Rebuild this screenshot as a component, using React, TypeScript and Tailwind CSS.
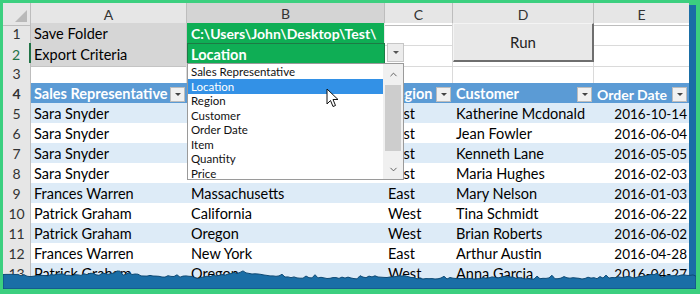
import { ChevronDown, ChevronUp } from "lucide-react";

const cols = "grid grid-cols-[28px_156px_198px_68px_141px_95px]";
const cellFont = "font-['Lato','Liberation_Sans',sans-serif]";

const rows = [
  { n: 5, rep: "Sara Snyder", loc: "", region: "East", customer: "Katherine Mcdonald", date: "2016-10-14" },
  { n: 6, rep: "Sara Snyder", loc: "", region: "East", customer: "Jean Fowler", date: "2016-06-04" },
  { n: 7, rep: "Sara Snyder", loc: "", region: "East", customer: "Kenneth Lane", date: "2016-05-05" },
  { n: 8, rep: "Sara Snyder", loc: "", region: "East", customer: "Maria Hughes", date: "2016-02-03" },
  { n: 9, rep: "Frances Warren", loc: "Massachusetts", region: "East", customer: "Mary Nelson", date: "2016-01-03" },
  { n: 10, rep: "Patrick Graham", loc: "California", region: "West", customer: "Tina Schmidt", date: "2016-06-22" },
  { n: 11, rep: "Patrick Graham", loc: "Oregon", region: "West", customer: "Brian Roberts", date: "2016-06-02" },
  { n: 12, rep: "Frances Warren", loc: "New York", region: "East", customer: "Arthur Austin", date: "2016-04-28" },
  { n: 13, rep: "Patrick Graham", loc: "Oregon", region: "West", customer: "Anna Garcia", date: "2016-04-27" },
];

const options = [
  "Sales Representative",
  "Location",
  "Region",
  "Customer",
  "Order Date",
  "Item",
  "Quantity",
  "Price",
];

// jagged torn-paper edge along the bottom (seeded so it is the same every time)
const tornPath = (() => {
  let seed = 7;
  const rnd = () => {
    seed = (seed * 16807) % 2147483647;
    return seed / 2147483647;
  };
  let d = "M0 22 L0 9";
  let base = 8;
  for (let x = 0; x <= 693; x += 3) {
    base += (rnd() - 0.5) * 1.6;
    base = Math.max(5, Math.min(11, base));
    const spike = rnd() < 0.18 ? -rnd() * 3 : 0;
    d += ` L${x} ${(base + spike + rnd() * 1.2).toFixed(1)}`;
  }
  return d + " L693 22 Z";
})();

const RowHead = ({ n, active }: { n: number; active?: boolean }) => (
  <div
    className={`flex items-center justify-center bg-[#e6e6e6] border-b border-[#cfcfcf] text-[14px] ${
      active ? "text-[#217346] border-r-2 border-r-[#217346]" : "text-[#333] border-r border-r-[#bdbdbd]"
    }`}
  >
    {n}
  </div>
);

const Filter = () => (
  <span className="ml-auto mr-[2px] flex h-[15px] w-[15px] shrink-0 items-center justify-center border border-[#bcbcbc] bg-[#f1f1f1]">
    <span className="h-0 w-0 border-x-[3px] border-t-[3px] border-x-transparent border-t-[#444]" />
  </span>
);

const Sheet = () => (
  <div className={`relative h-[286px] w-[686px] overflow-hidden bg-white text-black ${cellFont}`}>
    {/* column headers */}
    <div className={`${cols} h-[20px] bg-[#e6e6e6] text-[14px] text-[#333]`}>
      <div className="relative border-r border-b border-[#bdbdbd]">
        <svg className="absolute right-[3px] bottom-[3px]" width="12" height="12">
          <polygon points="12,0 12,12 0,12" fill="#b9b9b9" />
        </svg>
      </div>
      <div className="flex items-center justify-center border-r border-b border-[#bdbdbd]">A</div>
      <div className="flex items-center justify-center border-r border-[#bdbdbd] border-b-2 border-b-[#217346] bg-[#d4d4d4]">
        B
      </div>
      <div className="flex items-center justify-center border-r border-b border-[#bdbdbd]">C</div>
      <div className="flex items-center justify-center border-r border-b border-[#bdbdbd]">D</div>
      <div className="flex items-center justify-center border-b border-[#bdbdbd]">E</div>
    </div>

    {/* row 1 */}
    <div className={`${cols} h-[20px] text-[14.5px]`}>
      <RowHead n={1} />
      <div className="flex items-center bg-[#d6d6d6] pl-[3px] border-r border-b border-[#c4c4c4]">Save Folder</div>
      <div className="flex items-center bg-[#0fae55] pl-[4px] text-[14px] font-bold text-white border-r border-b border-[#e8e8e8]">
        C:\Users\John\Desktop\Test\
      </div>
      <div className="border-r border-b border-[#dadada]" />
      <div className="border-r border-b border-[#dadada]" />
      <div className="border-b border-[#dadada]" />
    </div>

    {/* row 2 */}
    <div className={`${cols} h-[20px] text-[14.5px]`}>
      <RowHead n={2} active />
      <div className="flex items-center bg-[#d6d6d6] pl-[3px] border-r border-b border-[#c4c4c4]">Export Criteria</div>
      <div className="flex items-center bg-[#0fae55] pl-[3px] font-bold text-white border border-[#1d7a45]">Location</div>
      <div className="border-r border-b border-[#dadada]" />
      <div className="border-r border-b border-[#dadada]" />
      <div className="border-b border-[#dadada]" />
    </div>

    {/* row 3 */}
    <div className={`${cols} h-[20px]`}>
      <RowHead n={3} />
      <div className="border-r border-b border-[#dadada]" />
      <div className="border-r border-b border-[#dadada]" />
      <div className="border-r border-b border-[#dadada]" />
      <div className="border-r border-b border-[#dadada]" />
      <div className="border-b border-[#dadada]" />
    </div>

    {/* row 4: table header (B4 sits under the open list) */}
    <div className={`${cols} h-[20px] text-[14.5px] font-bold text-white`}>
      <RowHead n={4} />
      <div className="flex items-center bg-[#5b9bd5] pl-[3px]">
        Sales Representative
        <Filter />
      </div>
      <div className="bg-[#5b9bd5]" />
      <div className="flex items-center bg-[#5b9bd5] pl-[3px]">
        Region
        <Filter />
      </div>
      <div className="flex items-center bg-[#5b9bd5] pl-[3px]">
        Customer
        <Filter />
      </div>
      <div className="flex items-center bg-[#5b9bd5] pl-[3px] text-[14px]">
        Order Date
        <Filter />
      </div>
    </div>

    {rows.map((r, i) => {
      const band = i % 2 === 0 ? "bg-[#ddebf7]" : "bg-white";
      return (
        <div key={r.n} className={`${cols} h-[20px] text-[14.5px]`}>
          <RowHead n={r.n} />
          <div className={`flex items-center border-b border-[#b7d0ea] pl-[3px] ${band}`}>{r.rep}</div>
          <div className={`flex items-center border-b border-[#b7d0ea] pl-[4px] ${band}`}>{r.loc}</div>
          <div className={`flex items-center border-b border-[#b7d0ea] pl-[3px] ${band}`}>{r.region}</div>
          <div className={`flex items-center border-b border-[#b7d0ea] pl-[3px] ${band}`}>{r.customer}</div>
          <div className={`flex items-center justify-end border-b border-[#b7d0ea] pr-[2px] text-[13.5px] ${band}`}>
            {r.date}
          </div>
        </div>
      );
    })}

    {/* Run button over D1:D2 */}
    <div className="absolute left-[450px] top-[20px] flex h-[39px] w-[141px] items-center justify-center border-t border-l border-[#f4f4f4] border-r-2 border-b-2 border-r-[#6e6e6e] border-b-[#6e6e6e] bg-[#e8e8e8] text-[15px] text-[#222]">
      Run
    </div>

    {/* validation dropdown arrow */}
    <div className="absolute left-[384px] top-[40px] flex h-[19px] w-[17px] items-center justify-center border border-[#c6c6c6] bg-[#ececec]">
      <span className="h-0 w-0 border-x-[3px] border-t-[3px] border-x-transparent border-t-[#555]" />
    </div>

    {/* validation list */}
    <div className="absolute left-[184px] top-[60px] flex h-[117px] w-[217px] border border-[#9a9a9a] bg-white text-[11.5px] text-[#111]">
      <div className="flex flex-1 flex-col pt-[0.5px]">
        {options.map((o, i) => (
          <div
            key={o}
            className={`flex h-[14.5px] items-center pl-[3px] ${i === 1 ? "bg-[#3391e6] text-white" : ""}`}
          >
            {o}
          </div>
        ))}
      </div>
      <div className="flex w-[20px] flex-col items-center bg-[#f0f0f0]">
        <div className="flex h-[21px] items-center">
          <ChevronUp size={11} strokeWidth={2} color="#555" />
        </div>
        <div className="h-[66px] w-[16px] bg-[#cdcdcd]" />
        <div className="flex flex-1 items-end pb-[4px]">
          <ChevronDown size={11} strokeWidth={2} color="#555" />
        </div>
      </div>
    </div>

    {/* mouse pointer */}
    <svg className="absolute left-[323px] top-[85px]" width="13" height="20" viewBox="0 0 13 20">
      <path d="M1 1 L1 16 L4.5 12.5 L7 18.5 L9.5 17.5 L7 11.5 L12 11.5 Z" fill="white" stroke="#111" strokeWidth="1" strokeLinejoin="round" />
    </svg>
  </div>
);

const App = () => (
  <div className="h-[294px] w-[700px] bg-[#3ccf7f] pt-[3px] pl-[3px]">
    <div className="relative flex h-[286px] w-[693px]">
      <Sheet />
      <div className="mt-[2px] w-[7px] bg-[#1a6ea6]" />
      <svg className="absolute bottom-0 left-0" width="693" height="22" viewBox="0 0 693 22">
        <path d={tornPath} fill="#1a6ea6" stroke="#0e4a75" strokeWidth="1" />
      </svg>
    </div>
  </div>
);

export default App;
